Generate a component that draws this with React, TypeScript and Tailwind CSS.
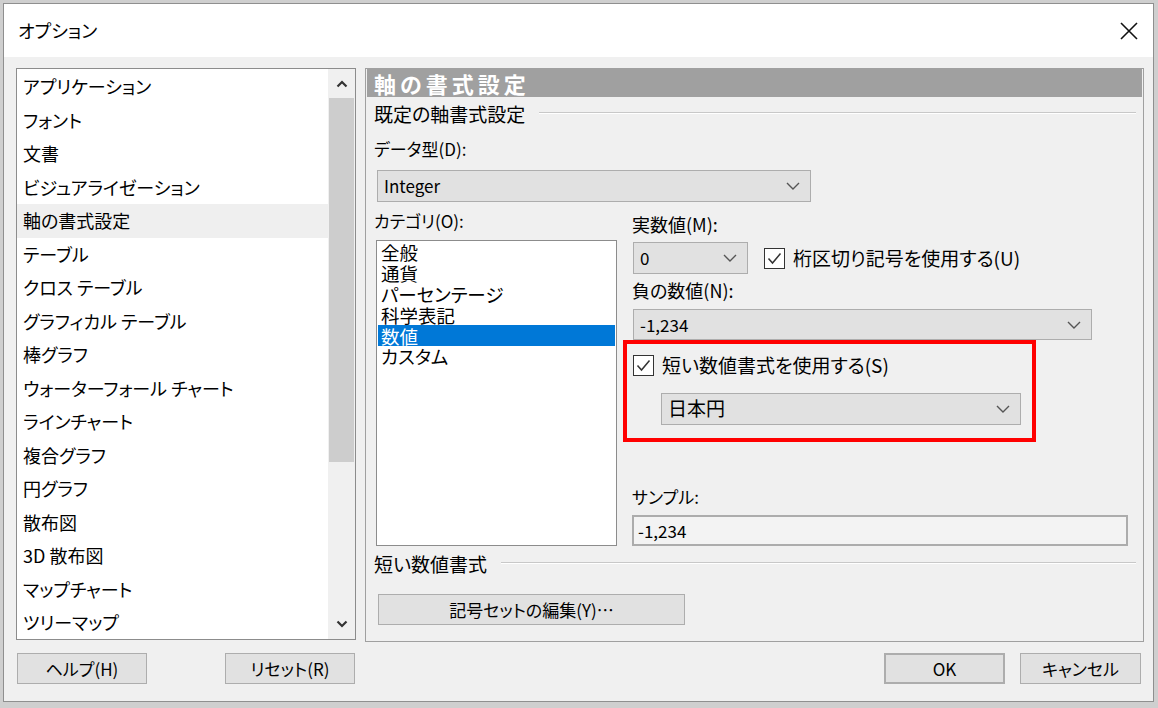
import { ReactNode } from "react"

const font = "font-['Noto_Sans_CJK_JP','Noto_Sans',sans-serif] [font-feature-settings:'palt']"

const menuItems = [
  "アプリケーション",
  "フォント",
  "文書",
  "ビジュアライゼーション",
  "軸の書式設定",
  "テーブル",
  "クロス テーブル",
  "グラフィカル テーブル",
  "棒グラフ",
  "ウォーターフォール チャート",
  "ラインチャート",
  "複合グラフ",
  "円グラフ",
  "散布図",
  "3D 散布図",
  "マップチャート",
  "ツリーマップ",
]

const categories = ["全般", "通貨", "パーセンテージ", "科学表記", "数値", "カスタム"]

function Chevron() {
  return (
    <svg width="14" height="8" viewBox="0 0 14 8">
      <polyline points="1,1 7,7 13,1" fill="none" stroke="#555" strokeWidth="1.4" />
    </svg>
  )
}

function ScrollArrow({ up = false }: { up?: boolean }) {
  return (
    <svg width="12" height="8" viewBox="0 0 12 8" className={up ? "rotate-180" : ""}>
      <polyline points="1.5,1.5 6,6 10.5,1.5" fill="none" stroke="#333" strokeWidth="2.2" />
    </svg>
  )
}

function Dropdown({ value, className }: { value: string; className: string }) {
  return (
    <div
      className={`flex items-center justify-between border border-[#adadad] bg-[#e1e1e1] pl-[6px] pr-[10px] text-[17px] ${className}`}
    >
      <span>{value}</span>
      <Chevron />
    </div>
  )
}

function Checkbox() {
  return (
    <div className="flex h-[21px] w-[21px] items-center justify-center border border-[#333] bg-white">
      <svg width="15" height="13" viewBox="0 0 15 13">
        <polyline points="1.5,6.5 5.5,11 13.5,1.5" fill="none" stroke="#333" strokeWidth="1.5" />
      </svg>
    </div>
  )
}

function Btn({ children, className }: { children: ReactNode; className: string }) {
  return (
    <div
      className={`flex h-[31px] items-center justify-center border border-[#adadad] bg-[#e1e1e1] text-[17px] ${className}`}
    >
      {children}
    </div>
  )
}

function GroupTitle({ text }: { text: string }) {
  return (
    <div className="flex h-[20px] items-center pr-[6px]">
      <span className="text-[19px] leading-none">{text}</span>
      <div className="ml-[14px] flex-1 border-t border-b border-t-[#c8c8c8] border-b-white" />
    </div>
  )
}

export default function App() {
  return (
    <div className={`h-[708px] w-[1158px] bg-[#cfcfcf] pl-[3px] pr-[4px] pt-[3px] pb-[6px] text-black ${font}`}>
      <div className="flex h-full flex-col border border-[#8f8f8f] bg-[#f0f0f0]">
        {/* barra de título */}
        <div className="flex h-[53px] items-center justify-between bg-white pl-[14px] pr-[15px]">
          <span className="text-[18px]">オプション</span>
          <svg width="18" height="18" viewBox="0 0 18 18">
            <path d="M1 1 L17 17 M17 1 L1 17" stroke="#111" strokeWidth="1.6" />
          </svg>
        </div>

        <div className="flex gap-[9px] pl-[12px] pt-[11px]">
          {/* lista da esquerda */}
          <div className="flex h-[572px] w-[340px] border border-[#8c8c8c] bg-white">
            <div className="flex-1 pt-[1px]">
              {menuItems.map((item) => (
                <div
                  key={item}
                  className={`flex h-[33.5px] items-center pl-[6px] text-[18px] ${
                    item === "軸の書式設定" ? "bg-[#efefef]" : ""
                  }`}
                >
                  {item}
                </div>
              ))}
            </div>
            <div className="flex w-[27px] flex-col bg-[#f0f0f0]">
              <div className="flex h-[29px] items-center justify-center">
                <ScrollArrow up />
              </div>
              <div className="mx-[1px] h-[364px] bg-[#cdcdcd]" />
              <div className="flex-1" />
              <div className="flex h-[30px] items-center justify-center">
                <ScrollArrow />
              </div>
            </div>
          </div>

          {/* painel da direita */}
          <div className="flex h-[574px] w-[779px] flex-col border border-[#a0a0a0] px-[1px]">
            <div className="flex h-[28px] items-center bg-[#a0a0a0] pl-[7px] text-[22px] font-bold tracking-[4px] text-white">
              軸の書式設定
            </div>
            <div className="flex flex-col pl-[7px]">
              <div className="mt-[6px]">
                <GroupTitle text="既定の軸書式設定" />
              </div>
              <div className="mt-[16px] flex h-[20px] items-center text-[17px]">データ型(D):</div>
              <Dropdown value="Integer" className="mt-[11px] ml-[3px] h-[32px] w-[434px]" />

              <div className="flex">
                {/* categoria */}
                <div className="flex w-[249px] flex-col">
                  <div className="mt-[9px] flex h-[20px] items-center text-[17px]">カテゴリ(O):</div>
                  <div className="mt-[9px] ml-[2px] h-[306px] w-[241px] border border-[#8c8c8c] bg-white p-[1px]">
                    {categories.map((c) => (
                      <div
                        key={c}
                        className={`flex h-[20.8px] items-center overflow-visible pl-[3px] text-[18.5px] leading-[20px] ${
                          c === "数値" ? "bg-[#0078d7] text-white" : ""
                        }`}
                      >
                        {c}
                      </div>
                    ))}
                  </div>
                </div>

                {/* opções numéricas */}
                <div className="flex flex-col">
                  <div className="mt-[12px] ml-[9px] flex h-[20px] items-center text-[18px]">実数値(M):</div>
                  <div className="mt-[8px] ml-[10px] flex items-center">
                    <Dropdown value="0" className="h-[32px] w-[115px]" />
                    <div className="ml-[16px]">
                      <Checkbox />
                    </div>
                    <span className="ml-[8px] text-[19px]">桁区切り記号を使用する(U)</span>
                  </div>
                  <div className="mt-[6px] ml-[9px] flex h-[20px] items-center text-[18px]">負の数値(N):</div>
                  <Dropdown value="-1,234" className="mt-[9px] ml-[10px] h-[31px] w-[459px]" />

                  <div className="h-[102px] w-[413px] border-[4px] border-[#ff0000] pl-[6px] pt-[7px]">
                    <div className="flex items-center">
                      <Checkbox />
                      <span className="ml-[8px] text-[19px]">短い数値書式を使用する(S)</span>
                    </div>
                    <Dropdown value="日本円" className="mt-[13px] ml-[28px] h-[32px] w-[360px] text-[19px]" />
                  </div>

                  <div className="mt-[45px] ml-[9px] flex h-[20px] items-center text-[17px]">サンプル:</div>
                  <div className="mt-[8px] ml-[9px] flex h-[31px] w-[496px] items-center border-2 border-[#acacac] bg-[#f3f3f3] pl-[4px] text-[17px]">
                    -1,234
                  </div>
                </div>
              </div>

              <div className="mt-[7px]">
                <GroupTitle text="短い数値書式" />
              </div>
              <Btn className="mt-[21px] ml-[4px] w-[307px]">記号セットの編集(Y)…</Btn>
            </div>
          </div>
        </div>

        {/* botões inferiores */}
        <div className="mt-[11px] flex pl-[13px] pr-[12px]">
          <Btn className="w-[130px]">ヘルプ(H)</Btn>
          <Btn className="ml-[78px] w-[130px]">リセット(R)</Btn>
          <div className="flex-1" />
          <Btn className="w-[121px] border-2 border-[#0078d7]">OK</Btn>
          <Btn className="ml-[15px] w-[121px]">キャンセル</Btn>
        </div>
      </div>
    </div>
  )
}
